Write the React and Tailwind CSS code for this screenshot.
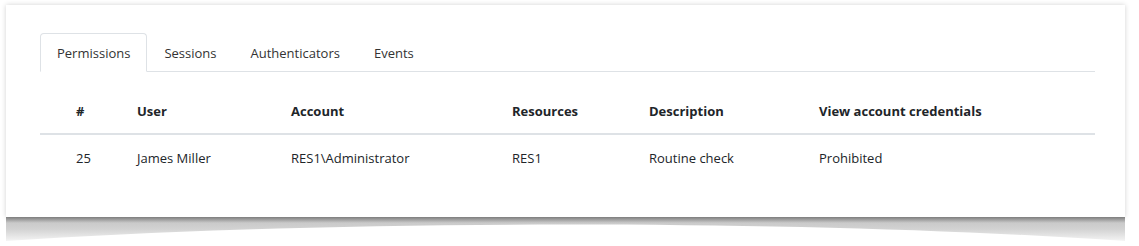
import { useState } from 'react';

const tabs = ['Permissions', 'Sessions', 'Authenticators', 'Events'];

const rows = [
    { id: 25, user: 'James Miller', account: 'RES1\\Administrator', resources: 'RES1', description: 'Routine check', view: 'Prohibited' },
];

export default function App() {
    const [active, setActive] = useState('Permissions');

    return (
        <div className="w-[1139px] h-[246px] bg-white pt-[5px] pl-[6px]" style={{ fontFamily: '"Open Sans", "Noto Sans", sans-serif' }}>
            <div className="relative w-[1119px] h-[212px]">
                {/* curled shadow under the card */}
                <div className="absolute left-0 top-full w-full h-[24px] bg-gradient-to-b from-[#c2c2c2] via-[#d2d2d2] to-[#f4f4f4] [clip-path:path('M0,0_H1119_V24_C800,2_320,2_0,24_Z')]" />
                <div className="absolute left-0 top-full w-full h-[6px] bg-gradient-to-b from-[#8a8a8a] to-transparent" />

                <div className="relative h-full bg-white shadow-[0_0_5px_rgba(0,0,0,0.18)] pt-[28px] pl-[34px] pr-[30px]">
                    {/* Tabs */}
                    <div className="flex border-b border-[#dee2e6]">
                        {tabs.map((t) => (
                            <button
                                key={t}
                                onClick={() => setActive(t)}
                                className={`h-[39px] pt-[2px] px-4 text-[13px] text-[#333] -mb-px rounded-t border ${
                                    active === t ? 'border-[#dee2e6] border-b-white bg-white' : 'border-transparent'
                                }`}
                            >
                                {t}
                            </button>
                        ))}
                    </div>

                    {/* Permissions table */}
                    <table className="w-full mt-[17px] text-[13px] text-[#212529] border-collapse">
                        <colgroup>
                            <col className="w-[85px]" />
                            <col className="w-[154px]" />
                            <col className="w-[221px]" />
                            <col className="w-[137px]" />
                            <col className="w-[170px]" />
                            <col />
                        </colgroup>
                        <thead>
                            <tr className="border-b-2 border-[#dee2e6]">
                                <th className="text-left font-bold pl-[36px] pt-[13px] pb-[11px]">#</th>
                                <th className="text-left font-bold px-3 pt-[13px] pb-[11px]">User</th>
                                <th className="text-left font-bold px-3 pt-[13px] pb-[11px]">Account</th>
                                <th className="text-left font-bold px-3 pt-[13px] pb-[11px]">Resources</th>
                                <th className="text-left font-bold px-3 pt-[13px] pb-[11px]">Description</th>
                                <th className="text-left font-bold px-3 pt-[13px] pb-[11px]">View account credentials</th>
                            </tr>
                        </thead>
                        <tbody>
                            {rows.map((r) => (
                                <tr key={r.id}>
                                    <td className="pl-[36px] pt-[14px] pb-3">{r.id}</td>
                                    <td className="px-3 pt-[14px] pb-3">{r.user}</td>
                                    <td className="px-3 pt-[14px] pb-3">{r.account}</td>
                                    <td className="px-3 pt-[14px] pb-3">{r.resources}</td>
                                    <td className="px-3 pt-[14px] pb-3">{r.description}</td>
                                    <td className="px-3 pt-[14px] pb-3">{r.view}</td>
                                </tr>
                            ))}
                        </tbody>
                    </table>
                </div>
            </div>
        </div>
    );
}
